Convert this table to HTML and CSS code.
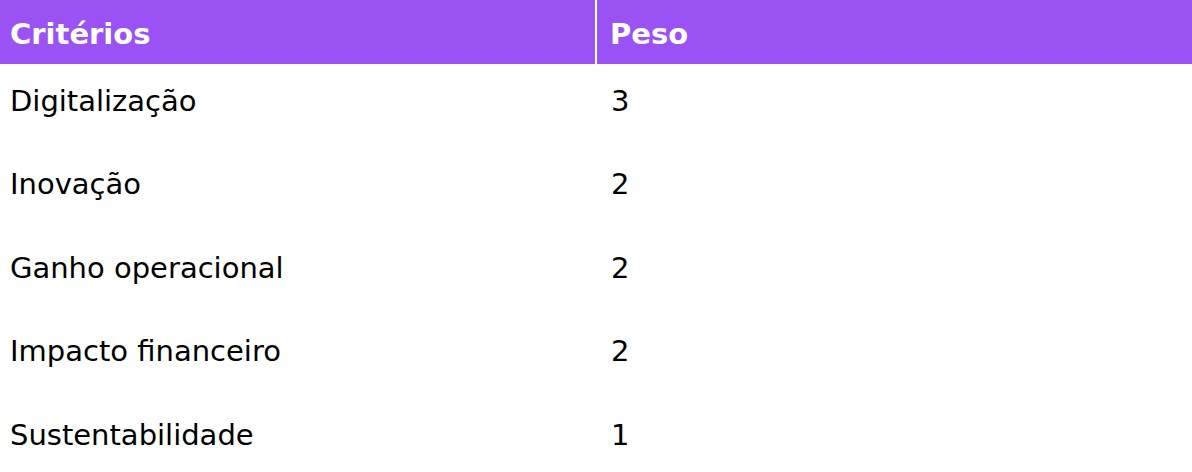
FILE: index.html
```
<!DOCTYPE html>
<html lang="pt">
<head>
<meta charset="utf-8">
<link rel="stylesheet" href="styles.css">
</head>
<body>
<table class="crit">
  <colgroup><col class="col-a"><col class="col-b"></colgroup>
  <thead>
    <tr><th class="c1">Critérios</th><th class="c2">Peso</th></tr>
  </thead>
  <tbody>
    <tr><td>Digitalização</td><td>3</td></tr>
    <tr><td>Inovação</td><td>2</td></tr>
    <tr><td>Ganho operacional</td><td>2</td></tr>
    <tr><td>Impacto financeiro</td><td>2</td></tr>
    <tr><td>Sustentabilidade</td><td>1</td></tr>
  </tbody>
</table>
</body>
</html>
```
FILE: styles.css
```
html, body { margin: 0; padding: 0; background: #fff; }
body { font-family: "DejaVu Sans", Verdana, sans-serif; color: #000; }
.crit { width: 1192px; border-collapse: collapse; table-layout: fixed; }
.col-a { width: 596px; }
.crit thead tr { height: 64px; }
.crit th { background: #9a52f5; color: #fff; font-weight: bold; text-align: left; padding: 4px 10px 0; font-size: 29px; }
.crit th.c1 { border-right: 2px solid #fff; }
.crit th.c2 { padding-left: 13px; }
.crit tbody tr { height: 83.5px; }
.crit td { padding: 0 10px 10px; font-size: 29px; text-align: left; vertical-align: middle; }
.crit td + td { padding-left: 15px; }
```
